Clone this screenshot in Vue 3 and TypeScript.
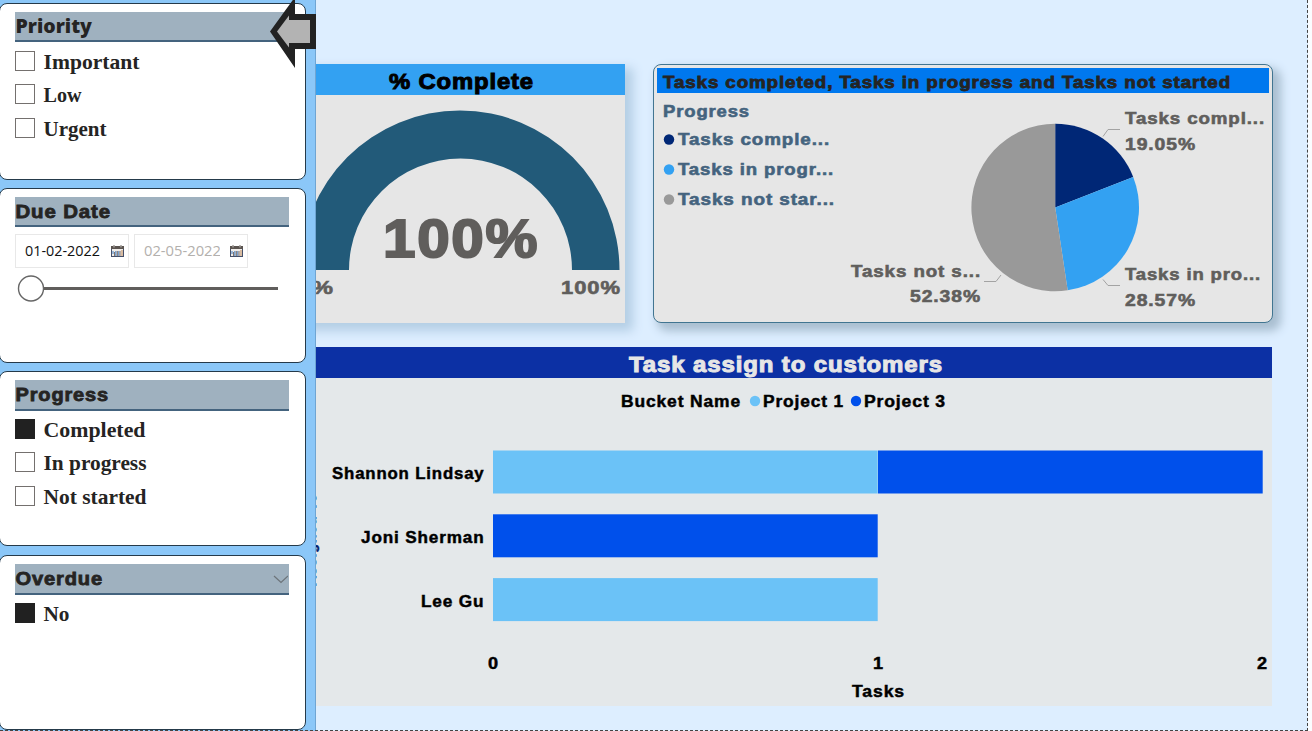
<script setup lang="ts">
interface Slicer { title: string; kind: string; options: { label: string; checked: boolean; width: number }[]; width: number }
const slicers: Slicer[] = [
  { title: 'Priority', kind: 'priority', width: 76, options: [
    { label: 'Important', checked: false, width: 96 }, { label: 'Low', checked: false, width: 38 }, { label: 'Urgent', checked: false, width: 63 } ] },
  { title: 'Due Date', kind: 'date', width: 95, options: [] },
  { title: 'Progress', kind: 'progress', width: 93, options: [
    { label: 'Completed', checked: true, width: 102 }, { label: 'In progress', checked: false, width: 103 }, { label: 'Not started', checked: false, width: 103 } ] },
  { title: 'Overdue', kind: 'overdue', width: 87, options: [{ label: 'No', checked: true, width: 26 }] },
]
const dates = [{ value: '01-02-2022', muted: false }, { value: '02-05-2022', muted: true }]

const legend = [
  { label: 'Tasks comple...', color: '#002776', y: 46.5, width: 152 },
  { label: 'Tasks in progr...', color: '#33a1f2', y: 76.5, width: 156 },
  { label: 'Tasks not star...', color: '#999999', y: 106.5, width: 157 },
]
const callouts = [
  { label: 'Tasks compl...', value: '19.05%', x: 471, y: 31, w: 140, vw: 71 },
  { label: 'Tasks in pro...', value: '28.57%', x: 471, y: 187, w: 136, vw: 71 },
]
const cx = 401.2, cy = 114.5, r = 83.8
function slice(from: number, to: number): string {
  const a = from * Math.PI * 2, b = to * Math.PI * 2
  const p = (t: number) => `${cx + r * Math.sin(t)} ${cy - r * Math.cos(t)}`
  return `M${cx} ${cy}L${p(a)}A${r} ${r} 0 ${to - from > 0.5 ? 1 : 0} 1 ${p(b)}Z`
}
const slices = [
  { d: slice(0, 0.1905), color: '#002776' },
  { d: slice(0.1905, 0.4762), color: '#33a1f2' },
  { d: slice(0.4762, 1), color: '#999999' },
]
const people = [
  { name: 'Shannon Lindsay', y: 72.5, width: 152, bars: [{ from: 0, color: '#6bc2f7' }, { from: 1, color: '#0050eb' }] },
  { name: 'Joni Sherman', y: 136.3, width: 123, bars: [{ from: 0, color: '#0050eb' }] },
  { name: 'Lee Gu', y: 200.1, width: 63, bars: [{ from: 0, color: '#6bc2f7' }] },
]
</script>

<template>
  <div class="page">
    <main class="report">
      <div class="top">
        <section class="card gauge">
          <h2 class="bar">
            <svg width="330" height="31"><text x="94" y="25" textLength="145" lengthAdjust="spacingAndGlyphs" class="black t22">% Complete</text></svg>
          </h2>
          <svg width="330" height="228" viewBox="0 0 330 228">
            <path d="M5.500 175A159.500 159.500 0 0 1 324.500 175H277A111.500 111.500 0 0 0 54 175Z" fill="#225a79" />
            <text x="88" y="162" textLength="156" lengthAdjust="spacingAndGlyphs" class="black big">100%</text>
            <text x="2" y="199" textLength="37" lengthAdjust="spacingAndGlyphs" class="black t19 gray">0%</text>
            <text x="266" y="199" textLength="60" lengthAdjust="spacingAndGlyphs" class="black t19 gray">100%</text>
          </svg>
        </section>

        <section class="card pie">
          <h2 class="bar">
            <svg width="612" height="25"><text x="6" y="19.500" textLength="568" lengthAdjust="spacingAndGlyphs" class="black t17 ink">Tasks completed, Tasks in progress and Tasks not started</text></svg>
          </h2>
          <svg width="618" height="226" viewBox="0 0 618 226">
            <text x="9" y="24" textLength="87" lengthAdjust="spacingAndGlyphs" class="black t17 slate">Progress</text>
            <g v-for="l in legend" :key="l.label">
              <circle cx="15" :cy="l.y" r="5.200" :fill="l.color" />
              <text x="24" :y="l.y + 5.5" :textLength="l.width" lengthAdjust="spacingAndGlyphs" class="black t17 slate">{{ l.label }}</text>
            </g>
            <path v-for="s in slices" :key="s.color" :d="s.d" :fill="s.color" />
            <path d="M449 43.500L454 36.500H466M449 186.500L454 192.500H466M330 188.500H342L347 182" fill="none" stroke="#a3a3a3" />
            <g v-for="c in callouts" :key="c.value">
              <text :x="c.x" :y="c.y" :textLength="c.w" lengthAdjust="spacingAndGlyphs" class="black t17 gray">{{ c.label }}</text>
              <text :x="c.x" :y="c.y + 26" :textLength="c.vw" lengthAdjust="spacingAndGlyphs" class="black t17 gray">{{ c.value }}</text>
            </g>
            <text x="197" y="183.500" textLength="130" lengthAdjust="spacingAndGlyphs" class="black t17 gray">Tasks not s...</text>
            <text x="256" y="208.500" textLength="71" lengthAdjust="spacingAndGlyphs" class="black t17 gray">52.38%</text>
          </svg>
        </section>
      </div>

      <section class="card bars">
        <h2 class="bar">
          <svg width="977" height="31"><text x="334" y="25" textLength="314" lengthAdjust="spacingAndGlyphs" class="black t22 light">Task assign to customers</text></svg>
        </h2>
        <svg width="977" height="328" viewBox="0 0 977 328">
          <text x="326" y="29" textLength="120" lengthAdjust="spacingAndGlyphs" class="black t16">Bucket Name</text>
          <circle cx="460" cy="23" r="5.200" fill="#6bc2f7" />
          <text x="468" y="29" textLength="81" lengthAdjust="spacingAndGlyphs" class="black t16">Project 1</text>
          <circle cx="561" cy="23" r="5.200" fill="#0050eb" />
          <text x="569" y="29" textLength="82" lengthAdjust="spacingAndGlyphs" class="black t16">Project 3</text>
          <g v-for="p in people" :key="p.name">
            <text :x="189 - p.width" :y="p.y + 28.500" :textLength="p.width + 0.5" lengthAdjust="spacingAndGlyphs" class="black t16">{{ p.name }}</text>
            <rect v-for="b in p.bars" :key="b.from" :x="198 + b.from * 385" :y="p.y" width="384.700" height="43" :fill="b.color" />
          </g>
          <text x="193" y="291" textLength="11" lengthAdjust="spacingAndGlyphs" class="black t16">0</text>
          <text x="578" y="291" textLength="11" lengthAdjust="spacingAndGlyphs" class="black t16">1</text>
          <text x="962" y="291" textLength="11" lengthAdjust="spacingAndGlyphs" class="black t16">2</text>
          <text x="557" y="319" textLength="53" lengthAdjust="spacingAndGlyphs" class="black t16">Tasks</text>
          <text transform="translate(20.500 208) rotate(-90)" textLength="93" lengthAdjust="spacingAndGlyphs" class="black t16 navy">Assigned To</text>
        </svg>
      </section>
    </main>

    <aside class="panel">
      <section v-for="s in slicers" :key="s.kind" class="slicer" :class="s.kind">
        <header>
          <svg width="273" height="28">
            <text x="0.500" y="20.500" :textLength="s.width + 0.5" lengthAdjust="spacingAndGlyphs" class="black t19 ink" :class="{ humanist: s.kind === 'priority' }">{{ s.title }}</text>
            <path v-if="s.kind === 'overdue'" d="M259 12L266 18.500L273 12" fill="none" stroke="#6d747a" stroke-width="1.200" />
          </svg>
        </header>
        <ul v-if="s.options.length">
          <li v-for="o in s.options" :key="o.label">
            <span class="box" :class="{ on: o.checked }"></span>
            <svg width="130" height="28"><text x="0.500" y="20.500" :textLength="o.width" lengthAdjust="spacingAndGlyphs" class="serif">{{ o.label }}</text></svg>
          </li>
        </ul>
        <template v-else>
          <div class="dates">
            <div v-for="d in dates" :key="d.value" class="date" :class="{ muted: d.muted }">
              <svg width="76" height="30"><text x="0" y="20" :textLength="d.muted ? 77 : 75" lengthAdjust="spacingAndGlyphs" class="day">{{ d.value }}</text></svg>
              <svg width="13" height="13" viewBox="0 0 13 13">
                <rect x=".5" y="1.500" width="12" height="10" fill="#f0ece8" stroke="#45506a" />
                <path d="M0 2.500H13" stroke="#5b5450" stroke-width="3" />
                <path d="M3 0V2.500M10 0V2.500" stroke="#a09a96" stroke-width="1.500" />
                <path d="M2 6V9M4.800 6V11M7.500 6V11" stroke="#79a2d0" stroke-width="1.500" />
                <path d="M3.500 7V11M6.300 6V11M9 6V11" stroke="#65534b" stroke-width=".8" />
                <path d="M11 5V11" stroke="#c08a58" />
              </svg>
            </div>
          </div>
          <svg class="slider" width="273" height="28">
            <path d="M16 14.500H263" stroke="#605e5c" stroke-width="3" />
            <circle cx="16" cy="14.500" r="12.500" fill="#fff" stroke="#666" stroke-width="1.400" />
          </svg>
        </template>
      </section>
      <svg class="back" width="47" height="70" viewBox="0 0 47 70">
        <path d="M1 31.500L26 -3V14H47V49H26V68Z" fill="#222" />
        <path d="M8 31.500L20 15.500V20H41V43H20V47.500Z" fill="#b3b3b3" />
      </svg>
    </aside>
    <div class="edge"></div>
  </div>
</template>

<style>
body { margin: 0; overflow: hidden; background: #fff; }
</style>
<style scoped>
* { box-sizing: border-box; }
svg { display: block; flex: none; }
h2, ul { margin: 0; padding: 0; }
.page { position: relative; width: 1312px; height: 731px; overflow: hidden; background: #fbfdff; }
.report { width: 1308px; height: 731px; background: #ddeeff; padding: 64px 0 0 295px; }
.top { display: flex; gap: 28px; }
.gauge { width: 330px; height: 259px; background: #e6e6e6; box-shadow: 6px 6px 10px 2px #b4cee5; }
.gauge .bar { background: #33a1f2; height: 31px; }
.pie { width: 620px; height: 259px; background: #e6e6e6; border: 1px solid #417591; border-radius: 8px; box-shadow: 6px 6px 10px 2px #a9bed0; padding-top: 3px; overflow: hidden; }
.pie .bar { margin: 0 3px; background: #0078ee; height: 25px; }
.bars { margin-top: 24px; width: 977px; height: 359px; background: #e4e8ea; position: relative; }
.bars .bar { background: #0c30a4; height: 31px; }
.black { font-family: "Liberation Sans", Arial, sans-serif; font-weight: 700; fill: #000; stroke: #000; stroke-width: .8px; letter-spacing: .8px; }
.t16 { font-size: 16px; stroke-width: .45px; }
.t17 { font-size: 17px; }
.t19 { font-size: 18.500px; }
.t22 { font-size: 22px; stroke-width: 1px; }
.big { font-size: 53px; fill: #605e5c; stroke: #605e5c; stroke-width: 2px; letter-spacing: 1.500px; }
.gray { fill: #605e5c; stroke: #605e5c; stroke-width: .6px; }
.ink { fill: #252423; stroke: #252423; }
.slate { fill: #44637e; stroke: #44637e; stroke-width: .6px; }
.light { fill: #e6e6e6; stroke: #e6e6e6; }
.navy { fill: #001a6e; stroke: #001a6e; }
.humanist { font-family: "Open Sans", sans-serif; font-weight: 800; stroke-width: 0; letter-spacing: 0; font-size: 19.500px; }
.panel { position: absolute; left: 0; top: 0; width: 315.500px; height: 731px; background: #8bc7f8; border-right: 1px solid #6fa5d3; padding-top: 3px; display: flex; flex-direction: column; gap: 8px; }
.slicer { width: 307px; margin-left: -1px; height: 177px; flex: none; background: #fff; border: 1px solid #253a4a; border-radius: 8px; padding: 8px 0 0 15px; }
.slicer.date, .slicer.progress, .slicer.overdue { height: 175px; }
.slicer.overdue { margin-top: 1px; }
header { width: 274px; height: 30px; background: #9fb1bf; border-bottom: 2px solid #44637e; }
.progress header, .overdue header { height: 31px; }
.progress ul, .overdue ul { padding-top: 3px; }
ul { list-style: none; padding-top: 4px; }
li { display: flex; align-items: center; gap: 8px; height: 33.6px; margin-top: -1px; margin-bottom: 1px; }
.box { width: 20px; height: 20px; border: 1.500px solid #74706e; background: #fff; margin-top: -2px; }
.box.on { background: #212121; border-color: #212121; }
.serif { font-family: "Liberation Serif", serif; font-weight: 700; font-size: 21px; fill: #252423; }
.dates { display: flex; gap: 5px; padding-top: 7px; }
.date .date { width: 114px; height: 34px; border: 1px solid #e8e8e8; padding-left: 9px; display: flex; align-items: center; gap: 10px; }
.day { font-family: "Open Sans", "Noto Sans", sans-serif; font-size: 14.500px; fill: #111; }
.muted .day { fill: #b3b0ad; }
.slider { margin-top: 6px; }
.back { position: absolute; left: 268.500px; top: 0; }
.edge { position: absolute; inset: 0 4px 0 0; border-right: 1px dashed #444; border-bottom: 1px dashed #444; }
</style>
